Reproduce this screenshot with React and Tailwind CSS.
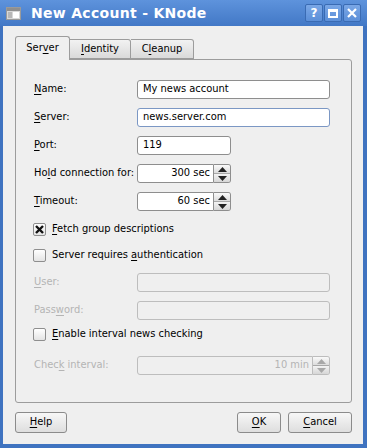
import React from "react";

const font = { fontFamily: '"DejaVu Sans", "Liberation Sans", sans-serif' };
const txt = "text-[11px] font-stretch-condensed";

function U({ children }) {
  return <span className="underline underline-offset-2">{children}</span>;
}

function Field({ value = "", width = "w-[193px]", focused, disabled }) {
  return (
    <div
      className={`h-[19px] ${width} shrink-0 rounded-[3px] border px-[5px] flex items-center ${txt} ${
        disabled
          ? "bg-[#efefef] border-[#bdbdbd] text-[#b4b4b4]"
          : focused
          ? "bg-white border-[#7b97c4] text-black"
          : "bg-white border-[#8e8e8e] text-black"
      }`}
    >
      {value}
    </div>
  );
}

function Spin({ value, width = "w-[94px]", disabled }) {
  const border = disabled ? "border-[#bdbdbd]" : "border-[#8e8e8e]";
  const arrow = disabled ? "#a8a8a8" : "#222";
  return (
    <div className={`h-[19px] ${width} shrink-0 flex`}>
      <div
        className={`flex-1 rounded-l-[3px] border ${border} flex items-center justify-end pr-[3px] ${txt} ${
          disabled ? "bg-[#efefef] text-[#b4b4b4]" : "bg-white text-black"
        }`}
      >
        {value}
      </div>
      <div className={`w-[17px] flex flex-col rounded-r-[3px] border border-l-0 ${border} overflow-hidden`}>
        <div className="flex-1 bg-gradient-to-b from-[#fafafa] to-[#dcdcdc] border-b border-[#a8a8a8] flex items-center justify-center">
          <svg width="9" height="5" viewBox="0 0 9 5">
            <path d="M0 5 L4.5 0 L9 5 Z" fill={arrow} />
          </svg>
        </div>
        <div className="flex-1 bg-gradient-to-b from-[#f3f3f3] to-[#d6d6d6] flex items-center justify-center">
          <svg width="9" height="5" viewBox="0 0 9 5">
            <path d="M0 0 L4.5 5 L9 0 Z" fill={arrow} />
          </svg>
        </div>
      </div>
    </div>
  );
}

function Row({ label, children, disabled, className = "" }) {
  return (
    <div className={`flex items-center h-[19px] ${className}`}>
      <div className={`w-[103px] shrink-0 whitespace-nowrap ${txt} ${disabled ? "text-[#b4b4b4]" : "text-black"}`}>
        {label}
      </div>
      {children}
    </div>
  );
}

function Check({ checked, children, className = "" }) {
  return (
    <div className={`flex items-center h-[19px] -ml-px ${className}`}>
      <div className="w-[13px] h-[13px] rounded-[2px] border border-[#8e8e8e] bg-gradient-to-b from-[#ffffff] to-[#e4e4e4] flex items-center justify-center">
        {checked && (
          <svg width="9" height="9" viewBox="0 0 9 9">
            <path d="M1 1 L8 8 M8 1 L1 8" stroke="#111" strokeWidth="2.4" />
          </svg>
        )}
      </div>
      <span className={`ml-[6px] whitespace-nowrap ${txt} text-black`}>{children}</span>
    </div>
  );
}

function Button({ children, width }) {
  return (
    <div
      className={`h-[21px] ${width} rounded-[3px] border border-[#8b8b8b] bg-gradient-to-b from-[#f7f7f7] to-[#dedede] flex items-center justify-center ${txt} text-black`}
    >
      {children}
    </div>
  );
}

function TitleButton({ children }) {
  return (
    <div className="w-[18px] h-[18px] rounded-[2px] border border-[#3a6bb3] bg-gradient-to-b from-[#7aa7e6] to-[#5b8fd8] flex items-center justify-center">
      {children}
    </div>
  );
}

export default function App() {
  return (
    <div className="w-[367px] h-[448px] bg-[#3f73c0] flex flex-col select-none" style={font}>
      <div className="h-[26px] flex items-center bg-gradient-to-b from-[#5e93dc] to-[#4278c6]">
        <div className="ml-[6px] w-[15px] h-[13px] bg-[#d8d8d8] border border-[#9a9a9a] flex flex-col">
          <div className="h-[3px] bg-[#8f8f8f]" />
          <div className="flex-1 flex gap-[1px] p-[1px]">
            <div className="w-[4px] bg-[#b7b7b7]" />
            <div className="flex-1 bg-white" />
          </div>
        </div>
        <span className="ml-[10px] text-[14px] font-bold text-white tracking-[0.3px]">New Account - KNode</span>
        <div className="ml-auto mr-[6px] flex gap-[1px]">
          <TitleButton>
            <span className="text-[12px] font-bold text-white leading-none">?</span>
          </TitleButton>
          <TitleButton>
            <div className="w-[10px] h-[9px] border-2 border-white border-t-[3px]" />
          </TitleButton>
          <TitleButton>
            <svg width="10" height="10" viewBox="0 0 10 10">
              <path d="M1 1 L9 9 M9 1 L1 9" stroke="white" strokeWidth="2.2" />
            </svg>
          </TitleButton>
        </div>
      </div>

      <div className="flex-1 ml-[3px] mr-[4px] mb-[4px] bg-[#efefef] pl-[12px] pr-[11px] pt-[10px] flex flex-col">
        <div className="flex items-end h-[23px] relative z-10">
          <div className={`w-[55px] h-[24px] -mb-px bg-[#efefef] border border-b-0 border-[#9c9c9c] rounded-t-[3px] flex items-center justify-center ${txt} text-black`}>
            Ser<U>v</U>er
          </div>
          <div className={`w-[61px] h-[20px] bg-gradient-to-b from-[#f2f2f2] to-[#dadada] border border-l-0 border-[#9c9c9c] rounded-tr-[3px] flex items-center justify-center ${txt} text-black`}>
            <U>I</U>dentity
          </div>
          <div className={`w-[63px] h-[20px] bg-gradient-to-b from-[#f2f2f2] to-[#dadada] border border-l-0 border-[#9c9c9c] rounded-tr-[3px] flex items-center justify-center ${txt} text-black`}>
            C<U>l</U>eanup
          </div>
        </div>
        <div className="h-[344px] border border-[#9c9c9c] rounded-b-[3px] rounded-tr-[3px] pl-[18px] pt-[20px] flex flex-col">
          <Row label={<><U>N</U>ame:</>}>
            <Field value="My news account" />
          </Row>
          <Row label={<><U>S</U>erver:</>} className="mt-[9px]">
            <Field value="news.server.com" focused />
          </Row>
          <Row label={<><U>P</U>ort:</>} className="mt-[9px]">
            <Field value="119" width="w-[94px]" />
          </Row>
          <Row label={<>Ho<U>l</U>d connection for:</>} className="mt-[9px]">
            <Spin value="300 sec" />
          </Row>
          <Row label={<><U>T</U>imeout:</>} className="mt-[9px]">
            <Spin value="60 sec" />
          </Row>
          <Check checked className="mt-[9px]">
            <U>F</U>etch group descriptions
          </Check>
          <Check className="mt-[7px]">
            Server requires <U>a</U>uthentication
          </Check>
          <Row label={<><U>U</U>ser:</>} disabled className="mt-[8px]">
            <Field disabled />
          </Row>
          <Row label={<>Pass<U>w</U>ord:</>} disabled className="mt-[9px]">
            <Field disabled />
          </Row>
          <Check className="mt-[5px]">
            <U>E</U>nable interval news checking
          </Check>
          <Row label={<>Chec<U>k</U> interval:</>} disabled className="mt-[12px]">
            <Spin value="10 min" width="w-[193px]" disabled />
          </Row>
        </div>
        <div className="mt-[9px] flex items-center">
          <Button width="w-[52px]">
            <U>H</U>elp
          </Button>
          <div className="ml-auto flex gap-[7px]">
            <Button width="w-[44px]">
              <U>O</U>K
            </Button>
            <Button width="w-[64px]">
              <U>C</U>ancel
            </Button>
          </div>
        </div>
      </div>
    </div>
  );
}
